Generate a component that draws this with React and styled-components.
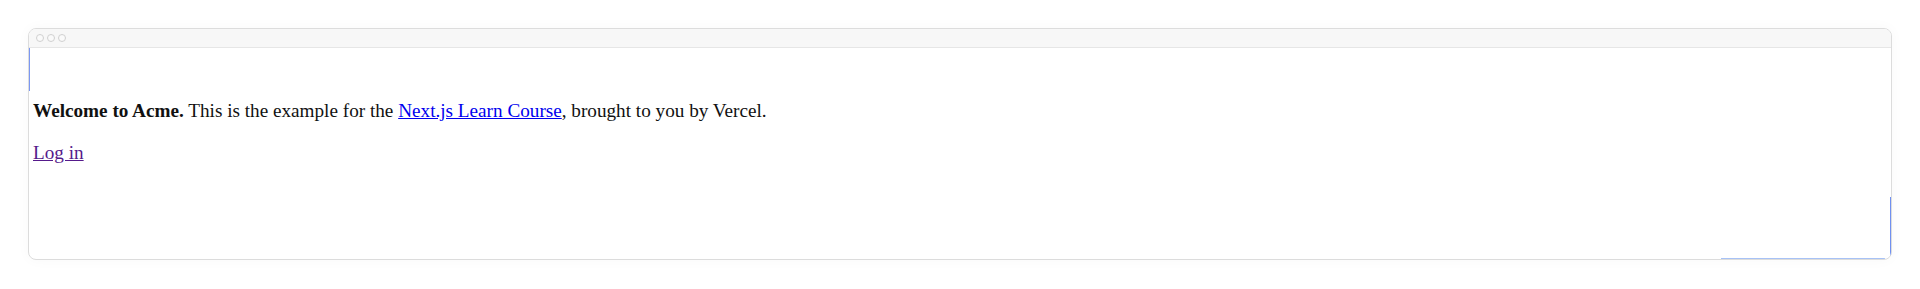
import styled, { createGlobalStyle } from "styled-components";

const GlobalStyle = createGlobalStyle`
  html, body {
    margin: 0;
    background: #ffffff;
  }
`;

const Page = styled.div`
  padding: 28px 28px 29px 28px;
`;

const BrowserWindow = styled.div`
  position: relative;
  border: 1px solid #dcdcdc;
  border-radius: 8px;
  background: #fff;
  box-shadow: 0 0 14px rgba(0, 0, 0, 0.03);
  overflow: hidden;
`;

const TitleBar = styled.div`
  height: 18px;
  display: flex;
  align-items: center;
  gap: 3px;
  padding-left: 7px;
  background: #f7f7f7;
  border-bottom: 1px solid #e6e6e6;
`;

const Dot = styled.span`
  width: 6px;
  height: 6px;
  border-radius: 50%;
  border: 1px solid #d0d0d0;
  background: #fafafa;
`;

const Content = styled.main`
  min-height: 211px;
  box-sizing: border-box;
  padding: 32px 4px 0 4px;
  font-family: "Liberation Serif", "Times New Roman", serif;
  font-size: 19.2px;
  line-height: 23px;
  color: #111;

  p {
    margin: 19px 0;
  }
`;

const Link = styled.a`
  color: ${(p) => (p.$visited ? "#551a8b" : "#0000ee")};
  text-decoration: underline;
`;

const Glow = styled.span`
  position: absolute;
  pointer-events: none;
  background: ${(p) => p.$color};
  ${(p) => p.$css}
`;

export default function App() {
  return (
    <>
      <GlobalStyle />
      <Page>
        <BrowserWindow>
          <TitleBar>
            <Dot />
            <Dot />
            <Dot />
          </TitleBar>
          <Content>
            <p>
              <strong>Welcome to Acme.</strong> This is the example for the{" "}
              <Link href="#">Next.js Learn Course</Link>, brought to you by Vercel.
            </p>
            <p>
              <Link href="#" $visited>
                Log in
              </Link>
            </p>
          </Content>
          <Glow $color="#7b97f2" $css="left: 0; top: 19px; width: 1px; height: 43px;" />
          <Glow $color="#7090f0" $css="right: 0; bottom: 2px; width: 1px; height: 60px;" />
          <Glow $color="#a7c2f6" $css="right: 6px; bottom: 0; width: 164px; height: 1px;" />
        </BrowserWindow>
      </Page>
    </>
  );
}
